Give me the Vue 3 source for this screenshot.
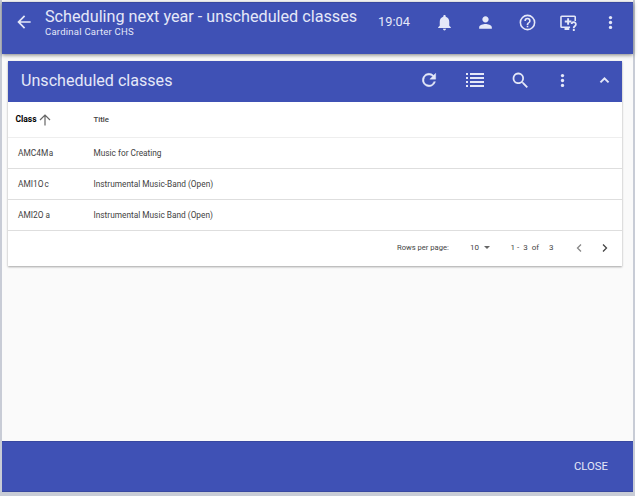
<script setup>
const rows = [
  { code: 'AMC4M', section: 'a', gap: 0.5, title: 'Music for Creating' },
  { code: 'AMI1O', section: 'c', gap: 1, title: 'Instrumental Music-Band (Open)' },
  { code: 'AMI2O', section: 'a', gap: 2, title: 'Instrumental Music Band (Open)' },
]
</script>

<template>
  <div class="window">
    <header class="appbar">
      <svg class="icon back" viewBox="0 0 24 24"><path d="M20 11H7.830l5.590-5.590L12 4l-8 8 8 8 1.410-1.410L7.830 13H20z" /></svg>
      <div class="titles">
        <h1>Scheduling next year - unscheduled classes</h1>
        <p>Cardinal Carter CHS</p>
      </div>
      <time>19:04</time>
      <nav class="actions">
        <svg class="icon" viewBox="0 0 24 24"><path d="M12 22c1.100 0 2-.9 2-2h-4c0 1.100.89 2 2 2zm6-6v-5c0-3.070-1.640-5.640-4.500-6.320V4c0-.83-.67-1.500-1.500-1.500s-1.500.67-1.500 1.500v.68C7.630 5.360 6 7.920 6 11v5l-2 2v1h16v-1z" /></svg>
        <svg class="icon" viewBox="0 0 24 24"><path d="M12 12c2.210 0 4-1.790 4-4s-1.790-4-4-4-4 1.790-4 4 1.790 4 4 4zm0 2c-2.670 0-8 1.340-8 4v2h16v-2c0-2.660-5.330-4-8-4z" /></svg>
        <svg class="icon" viewBox="0 0 24 24"><path d="M11 18h2v-2h-2zM12 2a10 10 0 1 0 0 20 10 10 0 0 0 0-20zm0 18a8 8 0 1 1 0-16 8 8 0 0 1 0 16zm0-14a4 4 0 0 0-4 4h2a2 2 0 1 1 4 0c0 2-3 1.750-3 5h2c0-2.250 3-2.500 3-5a4 4 0 0 0-4-4z" /></svg>
        <svg class="icon" viewBox="0 0 24 24">
          <path d="M3.500 3h16a2 2 0 0 1 2 2v5h-2V5h-16v12H14v2h-1v2.500H7V19H3.500a2 2 0 0 1-2-2V5a2 2 0 0 1 2-2z" />
          <path d="M10.300 6.500h2.400v3h3v2.400h-3v3h-2.400v-3h-3V9.500h3z" />
          <path d="M14.800 14a3.800 3.800 0 1 1 6.300 3c-.8.700-1.300 1.100-1.300 2.300h-2.300c0-2 .8-2.800 1.700-3.500a1.600 1.600 0 1 0-2.200-1.800zM17.500 20.300h2.400v2.300h-2.400z" />
        </svg>
        <svg class="icon" viewBox="0 0 24 24"><circle cx="12" cy="5.800" r="2.100" /><circle cx="12" cy="12" r="2.100" /><circle cx="12" cy="18.200" r="2.100" /></svg>
      </nav>
    </header>

    <main>
      <section class="card">
        <div class="card-bar">
          <h2>Unscheduled classes</h2>
          <div class="tools">
            <svg class="icon refresh" viewBox="0 0 24 24"><path d="M17.650 6.350A8 8 0 1 0 19.730 14h-2.080A6 6 0 1 1 12 6c1.660 0 3.140.69 4.220 1.780L13 11h7V4z" stroke="currentColor" stroke-width=".5" /></svg>
            <svg class="list" viewBox="0 0 18 14"><path d="M0 0h2v2H0zM0 4h2v2H0zM0 8h2v2H0zM0 12h2v2H0zM4 0h14v2H4zM4 4h14v2H4zM4 8h14v2H4zM4 12h14v2H4z" /></svg>
            <svg class="icon search" viewBox="0 0 24 24"><path d="M15.500 14h-.79l-.28-.27A6.500 6.500 0 1 0 13.730 14.430l.27.28v.79l5 4.990L20.490 19zm-6 0a4.500 4.500 0 1 1 0-9 4.500 4.500 0 0 1 0 9z" /></svg>
            <svg class="icon" viewBox="0 0 24 24"><circle cx="12" cy="5.800" r="2.100" /><circle cx="12" cy="12" r="2.100" /><circle cx="12" cy="18.200" r="2.100" /></svg>
            <svg class="icon" viewBox="0 0 24 24"><path d="M12 7.500l-6 6 1.700 1.700L12 10.900l4.300 4.300 1.700-1.700z" /></svg>
          </div>
        </div>

        <div class="row head">
          <div class="sorted">Class
            <svg viewBox="0 0 12 12"><path d="M6 11.500V1M1 6l5-5 5 5" /></svg>
          </div>
          <div class="col-title">Title</div>
        </div>
        <div v-for="row in rows" :key="row.code" class="row">
          <div class="code">{{ row.code }}<span class="section" :style="{ marginLeft: row.gap + 'px' }">{{ row.section }}</span></div>
          <div class="name">{{ row.title }}</div>
        </div>

        <div class="pager">
          <span class="label">Rows per page:</span>
          <span class="size">10 <i></i></span>
          <span class="range"><span>1 -</span><span>3</span><span>of</span><span class="total">3</span></span>
          <svg class="prev" viewBox="0 0 6 8"><path d="M5 .5L1.500 4 5 7.500" /></svg>
          <svg class="next" viewBox="0 0 6 8"><path d="M1 .5L4.500 4 1 7.500" /></svg>
        </div>
      </section>
    </main>

    <footer><button>CLOSE</button></footer>
  </div>
</template>

<style>
body { margin: 0; background: #fff; }
</style>

<style scoped>
* { box-sizing: border-box; }
.window {
  display: flex;
  flex-direction: column;
  width: 635px;
  height: 496px;
  border: solid #c8ccd6;
  border-width: 0 2px 4px;
  background: linear-gradient(#fff 2px, #fafafa 2px);
  padding-top: 2px;
  font-family: Roboto, "Liberation Sans", sans-serif;
}
h1, h2, p { margin: 0; font-weight: 400; white-space: nowrap; }
.icon { width: 19px; height: 19px; fill: currentColor; flex: none; }
.appbar {
  display: flex;
  height: 52px;
  flex: none;
  padding-left: 12px;
  background: #3f51b5;
  color: #e5e8f8;
  border-top: 1px solid #3848a0;
  box-shadow: 0 1px 4px rgba(0, 0, 0, .5);
}
.back { margin-top: 9px; width: 20px; height: 20px; }
.titles { width: 333px; margin-left: 11px; padding-top: 4px; }
h1 { font-size: 16.200px; line-height: 19px; }
p { font-size: 9.500px; line-height: 11px; letter-spacing: .24px; }
time { width: 35px; padding-top: 10px; font-size: 12.800px; line-height: 17px; }
.actions { display: flex; gap: 22.600px; margin: 10px 0 0 21.500px; }
main { flex: 1; padding: 7px 11px 0 6px; }
.card { background: #fff; box-shadow: 0 1px 2px rgba(0, 0, 0, .35); }
.card-bar {
  display: flex;
  align-items: center;
  justify-content: space-between;
  height: 41px;
  padding: 0 8px 3px 13px;
  background: #3f51b5;
  color: #e5e8f8;
}
h2 { font-size: 16.100px; }
.tools { display: flex; align-items: center; gap: 23px; }
.tools .refresh { width: 20px; height: 20px; margin-right: 4px; }
.tools .search { width: 21px; height: 21px; margin: 0 -1px 0 3px; }
.list { width: 18px; height: 14px; fill: currentColor; }
.row {
  display: flex;
  align-items: center;
  height: 31px;
  border-bottom: 1px solid #dedede;
  color: #424242;
  font-size: 8.300px;
}
.row.head { height: 36px; padding-bottom: 1px; border-color: #eee; }
.sorted { display: flex; align-items: center; width: 85.500px; padding-left: 7.500px; gap: 2px; color: #000; font-size: 8.500px; font-weight: 700; }
.sorted svg { width: 12px; height: 12px; margin-top: 2px; fill: none; stroke: #666; stroke-width: 1.200; }
.col-title { font-size: 7.800px; font-weight: 500; }
.code { width: 85.500px; padding-left: 10px; font-size: 8.400px; }
.section { font-size: 8.200px; }
.pager { display: flex; align-items: center; height: 35px; padding: 0 0 2px 389px; color: #444; font-size: 7.600px; white-space: nowrap; }
.label { width: 73px; }
.size { display: flex; align-items: center; gap: 5px; width: 40.500px; font-size: 8px; }
.size i { border: 3px solid transparent; border-top-color: #666; border-bottom: 0; }
.range { display: flex; gap: 4px; width: 65px; font-size: 8px; }
.total { margin-left: 6px; }
.pager svg { width: 6px; height: 8px; fill: none; stroke: #888; stroke-width: 1.300; }
.pager .next { margin-left: 20px; stroke: #444; }
footer {
  display: flex;
  justify-content: flex-end;
  height: 51px;
  flex: none;
  background: #3f51b5;
  border: 1px solid #3848a0;
  border-width: 1px 0;
}
button { padding: 0 25px 1px 0; border: 0; background: none; color: #e5e8f8; font: 400 11.300px Roboto, sans-serif; }
</style>
